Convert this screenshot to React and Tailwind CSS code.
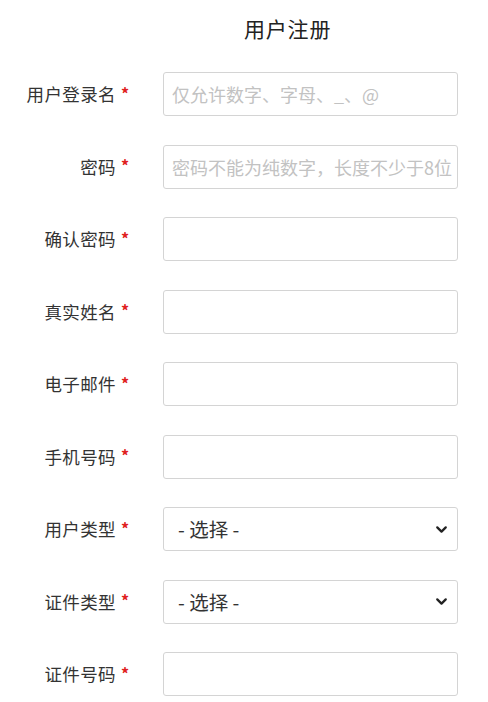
import { ChevronDown } from "lucide-react";

const fields = [
  { label: "用户登录名", placeholder: "仅允许数字、字母、_、@" },
  { label: "密码", placeholder: "密码不能为纯数字，长度不少于8位" },
  { label: "确认密码" },
  { label: "真实姓名" },
  { label: "电子邮件" },
  { label: "手机号码" },
  { label: "用户类型", select: true },
  { label: "证件类型", select: true },
  { label: "证件号码" },
];

export default function App() {
  return (
    <div
      className="w-[488px] h-[702px] bg-white text-[#333] overflow-hidden"
      style={{ fontFamily: '"Noto Sans CJK SC", "Noto Sans", sans-serif' }}
    >
      {/* Title */}
      <div className="pt-[14px] pl-[244px] text-[21px] leading-[28px] text-[#222] tracking-[0.8px]">用户注册</div>

      {/* Form */}
      <div className="mt-[30px] flex flex-col gap-[28.5px]">
        {fields.map((f) => (
          <div key={f.label} className="flex items-center h-[44px]">
            <div className="w-[116px] text-right text-[17.5px] leading-none tracking-[0.4px]">{f.label}</div>
            <span className="ml-[5px] w-[8px] text-[#e02020] text-[16px] leading-none font-bold -mt-[3px]">*</span>
            <div className="ml-[34px] w-[295px] h-[44px] border border-[#d4d4d4] rounded-[3px] flex items-center">
              {f.select ? (
                <div className="flex-1 flex items-center justify-between pl-[14px] pr-[7px]">
                  <span className="text-[19.5px] text-[#333]">- 选择 -</span>
                  <ChevronDown className="w-[17px] h-[17px] text-[#222]" strokeWidth={3.2} />
                </div>
              ) : (
                <input
                  className="w-full h-full pl-[8px] pr-[1px] text-[18px] outline-none bg-transparent placeholder:text-[#c2c2c2]"
                  placeholder={f.placeholder || ""}
                />
              )}
            </div>
          </div>
        ))}
      </div>
    </div>
  );
}
